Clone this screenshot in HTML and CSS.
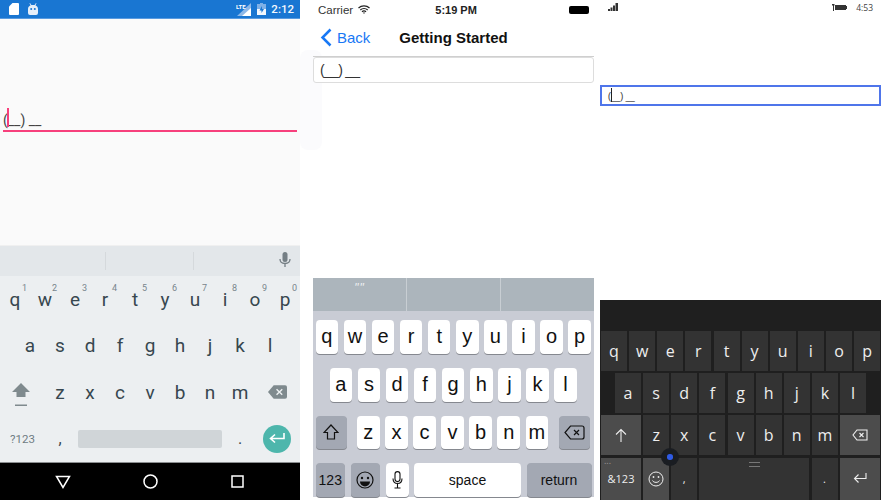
FILE: index.html
```html
<!DOCTYPE html>
<html lang="en">
<head>
  <meta charset="UTF-8">
  <title>Masked entry on three platforms</title>
  <link rel="stylesheet" href="styles.css">
</head>
<body>
<div class="screens">

  <!-- android -->
  <section class="android">
    <div class="a-status">
      <svg width="10" height="12" viewBox="0 0 10 12"><path d="M3.5 0H9a1 1 0 0 1 1 1v10a1 1 0 0 1-1 1H1a1 1 0 0 1-1-1V3.5z" fill="#fff"/></svg>
      <svg width="10" height="12" viewBox="0 0 10 12"><path d="M2 0l1.4 2h3.2L8 0l.5.4L7.4 2.2C9 3 10 4 10 6v4a2 2 0 0 1-2 2H2a2 2 0 0 1-2-2V6c0-2 1-3 2.6-3.8L1.5.4z" fill="#e6eef9"/><circle cx="3.2" cy="6" r="1" fill="#1976d2"/><circle cx="6.8" cy="6" r="1" fill="#1976d2"/></svg>
      <span class="a-status-gap"></span>
      <svg width="15" height="14" viewBox="0 0 15 14"><path d="M15 1v13H1z" fill="#8db8e8"/><path d="M15 6v8H6z" fill="#fff"/><text x="0" y="6.5" class="a-lte">LTE</text></svg>
      <svg class="a-ic-bat" width="9" height="12" viewBox="0 0 9 12"><path d="M3 0h3v1h3v11H0V1h3z" fill="#7fb0e6"/><path d="M0 6h9v6H0z" fill="#f2f7fd"/><path d="M5 3L2.5 7.5h2V10L7 6H5z" fill="#1976d2"/></svg>
      <span class="a-time">2:12</span>
    </div>
    <div class="a-content">
      <div class="a-field"><span class="a-cursor"></span>(__) __</div>
    </div>
    <div class="a-suggest">
      <div></div><div></div>
      <div class="a-mic">
        <svg width="12" height="16" viewBox="0 0 12 16"><rect x="3.5" y="0" width="5" height="10" rx="2.5" fill="#757f85"/><path d="M1 7c0 3 2 4.5 5 4.5S11 10 11 7M6 11.5V15" fill="none" stroke="#757f85" stroke-width="1.3"/></svg>
      </div>
    </div>
    <div class="a-keys">
      <div class="a-row">
        <span class="a-key">q<sup>1</sup></span><span class="a-key">w<sup>2</sup></span><span class="a-key">e<sup>3</sup></span><span class="a-key">r<sup>4</sup></span><span class="a-key">t<sup>5</sup></span><span class="a-key">y<sup>6</sup></span><span class="a-key">u<sup>7</sup></span><span class="a-key">i<sup>8</sup></span><span class="a-key">o<sup>9</sup></span><span class="a-key">p<sup>0</sup></span>
      </div>
      <div class="a-row a-row-mid">
        <span class="a-key">a</span><span class="a-key">s</span><span class="a-key">d</span><span class="a-key">f</span><span class="a-key">g</span><span class="a-key">h</span><span class="a-key">j</span><span class="a-key">k</span><span class="a-key">l</span>
      </div>
      <div class="a-row">
        <span class="a-key a-wide a-shift">
          <svg width="18" height="24" viewBox="0 0 18 24"><path d="M9 0L18 9H13.5V14H4.5V9H0z" fill="#7f8a8e"/><rect x="3" y="21.5" width="12" height="1.5" fill="#7f8a8e"/></svg>
        </span>
        <span class="a-key">z</span><span class="a-key">x</span><span class="a-key">c</span><span class="a-key">v</span><span class="a-key">b</span><span class="a-key">n</span><span class="a-key">m</span>
        <span class="a-key a-wide">
          <svg width="19" height="14" viewBox="0 0 20 14"><path d="M6 0H18a2 2 0 0 1 2 2V12a2 2 0 0 1-2 2H6L0 7z" fill="#7f8a8e"/><path d="M9 4l6 6M15 4l-6 6" stroke="#eceff1" stroke-width="1.5"/></svg>
        </span>
      </div>
      <div class="a-row">
        <span class="a-key a-wide a-sym">?123</span>
        <span class="a-key a-punct a-comma">,</span>
        <span class="a-space"><span></span></span>
        <span class="a-key a-punct a-period">.</span>
        <span class="a-key a-wide">
          <span class="a-enter">
            <svg width="16" height="11" viewBox="0 0 16 11"><path d="M15 0v5.5H2M6 1.5L1.5 5.5 6 9.5" fill="none" stroke="#fff" stroke-width="1.6"/></svg>
          </span>
        </span>
      </div>
    </div>
    <div class="a-nav">
      <svg width="16" height="14" viewBox="0 0 16 14"><path d="M1.5 1.5h13L8 12.5z" fill="none" stroke="#fff" stroke-width="1.5"/></svg>
      <svg width="15" height="15" viewBox="0 0 15 15"><circle cx="7.5" cy="7.5" r="6.5" fill="none" stroke="#fff" stroke-width="1.5"/></svg>
      <svg width="13" height="13" viewBox="0 0 13 13"><rect x="1" y="1" width="11" height="11" fill="none" stroke="#fff" stroke-width="1.5"/></svg>
    </div>
  </section>

  <!-- ios -->
  <section class="ios">
    <div class="i-status">
      <span class="i-carrier">Carrier</span>
      <svg width="12" height="9" viewBox="0 0 12 9"><path d="M0.5 3a8 8 0 0 1 11 0M2.3 5a5.3 5.3 0 0 1 7.4 0M4 6.8a2.7 2.7 0 0 1 4 0" fill="none" stroke="#222" stroke-width="1.2"/><path d="M5 7.5L6 9l1-1.5z" fill="#222"/></svg>
      <span class="i-clock">5:19 PM</span>
      <span class="i-batt"></span>
    </div>
    <div class="i-nav">
      <svg width="12" height="19" viewBox="0 0 12 19"><path d="M10.5 1.5L2.5 9.5l8 8" fill="none" stroke="#1878f5" stroke-width="2.5"/></svg>
      <span class="i-back">Back</span>
      <span class="i-title">Getting Started</span>
    </div>
    <div class="i-field">(__) __</div>
    <div class="i-keyboard">
      <div class="i-suggest"><div class="i-quote">""</div><div></div><div></div></div>
      <div class="i-keys">
        <div class="i-row">
          <span class="i-key">q</span><span class="i-key">w</span><span class="i-key">e</span><span class="i-key">r</span><span class="i-key">t</span><span class="i-key">y</span><span class="i-key">u</span><span class="i-key">i</span><span class="i-key">o</span><span class="i-key">p</span>
        </div>
        <div class="i-row i-row-mid">
          <span class="i-key">a</span><span class="i-key">s</span><span class="i-key">d</span><span class="i-key">f</span><span class="i-key">g</span><span class="i-key">h</span><span class="i-key">j</span><span class="i-key">k</span><span class="i-key">l</span>
        </div>
        <div class="i-row">
          <span class="i-key i-dark i-shift">
            <svg width="16" height="16" viewBox="0 0 16 16"><path d="M8 1L15 8.5H11.5V15H4.5V8.5H1z" fill="none" stroke="#111" stroke-width="1.2"/></svg>
          </span>
          <span class="i-key">z</span><span class="i-key">x</span><span class="i-key">c</span><span class="i-key">v</span><span class="i-key">b</span><span class="i-key">n</span><span class="i-key">m</span>
          <span class="i-key i-dark i-shift">
            <svg width="21" height="15" viewBox="0 0 21 15"><path d="M6.5 1H18a2 2 0 0 1 2 2V12a2 2 0 0 1-2 2H6.5L1 7.5z" fill="none" stroke="#111" stroke-width="1.2"/><path d="M10 5l5 5M15 5l-5 5" stroke="#111" stroke-width="1.2"/></svg>
          </span>
        </div>
        <div class="i-row">
          <span class="i-key i-dark i-small i-fn">123</span>
          <span class="i-key i-dark i-fn">
            <svg width="18" height="18" viewBox="0 0 18 18"><circle cx="9" cy="9" r="8" fill="none" stroke="#111" stroke-width="1.2"/><circle cx="6" cy="7" r="1.2" fill="#111"/><circle cx="12" cy="7" r="1.2" fill="#111"/><path d="M4 10.5h10a5 5 0 0 1-10 0z" fill="#111"/></svg>
          </span>
          <span class="i-key i-mic">
            <svg width="11" height="18" viewBox="0 0 11 18"><rect x="3" y="0.6" width="5" height="10" rx="2.5" fill="none" stroke="#111" stroke-width="1.1"/><path d="M1 7.5c0 3.5 2 5 4.5 5s4.5-1.5 4.5-5M5.5 12.5V17M2.500 17h6" fill="none" stroke="#111" stroke-width="1.1"/></svg>
          </span>
          <span class="i-key i-small i-spacebar">space</span>
          <span class="i-key i-dark i-small i-return">return</span>
        </div>
      </div>
    </div>
  </section>

  <!-- windows -->
  <section class="win">
    <div class="w-status">
      <svg width="10" height="8" viewBox="0 0 10 8"><path d="M0 6h2v2H0zM2.5 4.5h2V8h-2zM5 2.5h2V8H5zM7.5 0H10v8H7.5z" fill="#333"/></svg>
      <span class="w-gap"></span>
      <svg width="15" height="7" viewBox="0 0 15 7"><path d="M0 0h2.5v1.5H2V7H1V1.5H0zM3 1h11v1h1v3h-1v1H3z" fill="#333"/></svg>
      <span class="w-time">4:53</span>
    </div>
    <div class="w-field"><span class="w-cursor"></span>(__) __</div>
    <div class="w-keyboard">
      <div class="w-row">
        <span class="w-key">q</span><span class="w-key">w</span><span class="w-key">e</span><span class="w-key">r</span><span class="w-key">t</span><span class="w-key">y</span><span class="w-key">u</span><span class="w-key">i</span><span class="w-key">o</span><span class="w-key">p</span>
      </div>
      <div class="w-row w-row-mid">
        <span class="w-key">a</span><span class="w-key">s</span><span class="w-key">d</span><span class="w-key">f</span><span class="w-key">g</span><span class="w-key">h</span><span class="w-key">j</span><span class="w-key">k</span><span class="w-key">l</span>
      </div>
      <div class="w-row">
        <span class="w-key w-fn w-wide">
          <svg width="12" height="14" viewBox="0 0 12 14"><path d="M6 14V1.5M1 6.5l5-5 5 5" fill="none" stroke="#eee" stroke-width="1.1"/></svg>
        </span>
        <span class="w-key">z</span><span class="w-key">x</span><span class="w-key">c</span><span class="w-key">v</span><span class="w-key">b</span><span class="w-key">n</span><span class="w-key">m</span>
        <span class="w-key w-fn w-wide">
          <svg width="16" height="12" viewBox="0 0 16 12"><path d="M5 1H15V11H5L1 6z" fill="none" stroke="#eee" stroke-width="1.1"/><path d="M7.5 4l4 4M11.5 4l-4 4" stroke="#eee" stroke-width="1.1"/></svg>
        </span>
      </div>
      <div class="w-row">
        <span class="w-key w-fn w-wide w-sym"><i class="w-dots">...</i>&amp;123</span>
        <span class="w-key w-fn">
          <svg width="16" height="16" viewBox="0 0 16 16"><circle cx="8" cy="8" r="7" fill="none" stroke="#eee" stroke-width="1"/><circle cx="5.5" cy="6" r="0.9" fill="#eee"/><circle cx="10.5" cy="6" r="0.9" fill="#eee"/><path d="M4.5 9.5c1 2.5 6 2.5 7 0" fill="none" stroke="#eee" stroke-width="1"/></svg>
        </span>
        <span class="w-key w-low">,</span>
        <span class="w-key w-spacebar"><i class="w-grip"></i></span>
        <span class="w-key w-low">.</span>
        <span class="w-key w-fn w-wide">
          <svg width="14" height="11" viewBox="0 0 14 11"><path d="M13 0v5.5H1.5M5.5 1.5L1.5 5.5l4 4" fill="none" stroke="#eee" stroke-width="1.1"/></svg>
        </span>
      </div>
      <span class="w-knob"><i></i></span>
    </div>
  </section>

</div>
</body>
</html>
```

FILE: styles.css
```css
html, body {
  margin: 0;
  padding: 0;
  background: #fff;
}

.screens {
  display: flex;
  width: 881px;
  height: 500px;
  overflow: hidden;
}

section {
  height: 500px;
  display: flex;
  flex-direction: column;
  position: relative;
}

/* android */
.android {
  width: 300px;
  background: #fafafa;
  font-family: Roboto, sans-serif;
}

.a-status {
  height: 18px;
  background: #1976d2;
  border-bottom: 1px solid #5a9be0;
  display: flex;
  align-items: center;
  padding: 0 6px 0 9px;
  gap: 9px;
}

.a-status-gap {
  flex: 1;
}

.a-lte {
  font: 700 6px "Liberation Sans Narrow", Roboto, sans-serif;
  fill: #fff;
}

.a-ic-bat {
  margin-left: -3px;
}

.a-time {
  color: #f3f8fd;
  font-size: 11.5px;
  font-weight: 500;
  margin-left: -4px;
}

.a-content {
  flex: 1;
  padding: 90px 3px 0;
}

.a-field {
  position: relative;
  height: 21px;
  border-bottom: 2px solid #f7407c;
  font-size: 14px;
  line-height: 23px;
  color: #444;
}

.a-cursor {
  position: absolute;
  left: 4px;
  top: -1px;
  width: 1.5px;
  height: 19px;
  background: #f7407c;
}

.a-suggest {
  height: 30px;
  background: #e3e7ea;
  border-top: 1px solid #f0f0f0;
  display: flex;
  align-items: center;
}

.a-suggest div {
  height: 18px;
  width: 87px;
  border-right: 1px solid #d5d9dc;
}

.a-suggest div:first-child {
  width: 105px;
}

.a-suggest .a-mic {
  flex: 1;
  border: 0;
  display: flex;
  justify-content: flex-end;
  padding-right: 9px;
}

.a-keys {
  height: 187px;
  background: #eceff1;
  border-bottom: 1px solid #8b8e90;
  box-sizing: border-box;
  display: flex;
  flex-direction: column;
}

.a-row {
  flex: 1;
  display: flex;
}

.a-row-mid {
  padding: 0 15px;
}

.a-key {
  flex: 1;
  position: relative;
  display: flex;
  align-items: center;
  justify-content: center;
  font-size: 19px;
  color: #37474f;
}

.a-key sup {
  position: absolute;
  top: 7px;
  right: 3px;
  font-size: 9px;
  line-height: 10px;
  color: #78858c;
}

.a-wide {
  flex: 0 0 45px;
}

.a-shift {
  padding-right: 3px;
  padding-top: 5px;
  box-sizing: border-box;
}

.a-sym {
  font-size: 11.5px;
  color: #6f7c83;
}

.a-punct {
  flex: 0 0 33px;
  box-sizing: border-box;
  font-size: 16px;
}

.a-comma {
  padding-right: 3px;
}

.a-period {
  padding-left: 3px;
}

.a-space {
  flex: 1;
  display: flex;
  align-items: center;
}

.a-space span {
  display: block;
  width: 100%;
  height: 18px;
  background: #d0d5d8;
  border-radius: 2px;
}

.a-enter {
  width: 28px;
  height: 28px;
  margin-left: -1px;
  border-radius: 50%;
  background: #4db6ac;
  display: flex;
  align-items: center;
  justify-content: center;
}

.a-nav {
  height: 37px;
  background: #000;
  display: flex;
  align-items: center;
  gap: 72.5px;
  padding-left: 54.5px;
}

/* ios */
.ios {
  width: 300px;
  padding: 0 6px 0 13px;
  box-sizing: border-box;
  background: #fff;
  font-family: "Liberation Sans", Arial, sans-serif;
}

/* faint smudge left of the field */
.ios::before {
  content: "";
  position: absolute;
  left: 0;
  top: 50px;
  width: 22px;
  height: 100px;
  border-radius: 8px;
  background: #fbfbfd;
}

.i-status {
  height: 19px;
  padding: 0 5px;
  display: flex;
  align-items: center;
  gap: 5px;
  font-size: 11.5px;
  color: #333;
}

.i-clock {
  flex: 1;
  text-align: center;
  font-size: 11px;
  font-weight: 700;
  color: #222;
  padding-right: 27px;
}

.i-batt {
  width: 20px;
  height: 8px;
  background: #000;
  border-radius: 2px;
  box-shadow: 1.5px 0 0 -2.5px #000;
}

.i-nav {
  height: 37px;
  padding-left: 7px;
  display: flex;
  align-items: center;
  gap: 5px;
  border-bottom: 1px solid #cfcfcf;
  position: relative;
}

.i-back {
  font-size: 15px;
  color: #1878f5;
}

.i-title {
  font-size: 15px;
  font-weight: 700;
  color: #111;
  margin-left: 24px;
}

.i-field {
  height: 26px;
  box-sizing: border-box;
  border: 1px solid #ddd;
  border-radius: 3px;
  padding-left: 6px;
  font-size: 14px;
  letter-spacing: -0.7px;
  line-height: 24px;
  color: #333;
  position: relative;
  background: #fff;
}

.i-keyboard {
  margin-top: auto;
  margin-bottom: 3px;
}

.i-suggest {
  height: 33px;
  background: #acb5bc;
  display: flex;
}

.i-suggest div {
  flex: 1;
  border-left: 1px solid #c8ced3;
}

.i-suggest div:first-child {
  border-left: 0;
}

.i-quote {
  color: #eef0f2;
  font-size: 12px;
  font-style: italic;
  letter-spacing: 1px;
  text-align: center;
  line-height: 21px;
}

.i-keys {
  height: 186px;
  box-sizing: border-box;
  background: #c9ccd5;
  padding: 9px 2.5px 0;
  display: flex;
  flex-direction: column;
  gap: 14px;
}

.i-row {
  height: 34px;
  display: flex;
  gap: 5.5px;
}

.i-row-mid {
  padding: 0 14px;
}

.i-key {
  flex: 0 0 22.6px;
  display: flex;
  align-items: center;
  justify-content: center;
  background: #fff;
  border-radius: 4px;
  box-shadow: 0 1px 0 #85888f;
  font-size: 20px;
  color: #111;
}

.i-key.i-shift {
  flex-basis: 31px;
}

.i-shift:first-child {
  margin-right: 5px;
}

.i-shift:last-child {
  margin-left: 5px;
}

.i-dark {
  background: #a3a8b3;
}

.i-small {
  font-size: 14px;
}

.i-key.i-fn {
  flex-basis: 29.5px;
}

.i-key.i-mic {
  flex-basis: 23px;
}

.i-key.i-spacebar {
  flex-basis: 107px;
}

.i-key.i-return {
  flex-basis: 65px;
}

/* windows */
.win {
  width: 281px;
  background: #fff;
  font-family: "Open Sans", "Noto Sans", sans-serif;
}

.w-status {
  height: 14px;
  padding: 0 8px;
  display: flex;
  align-items: center;
  gap: 9px;
  font-size: 8.5px;
  color: #444;
}

.w-gap {
  flex: 1;
}

.w-field {
  position: relative;
  margin-top: 71px;
  height: 21px;
  box-sizing: border-box;
  border: 2px solid #4f75ea;
  padding-left: 6px;
  font-size: 11px;
  letter-spacing: -0.3px;
  line-height: 18px;
  color: #444;
}

.w-cursor {
  position: absolute;
  left: 9px;
  top: 1px;
  width: 1px;
  height: 14px;
  background: #222;
}

.w-keyboard {
  position: relative;
  margin-top: auto;
  height: 200px;
  box-sizing: border-box;
  background: #1f1f1f;
  padding: 31px 1px 0;
  display: flex;
  flex-direction: column;
  gap: 2.2px;
}

.w-row {
  height: 40px;
  display: flex;
  gap: 2.13px;
}

.w-row:last-of-type {
  height: 42px;
}

.w-row-mid {
  padding-left: 14px;
}

.w-key {
  flex: 0 0 26px;
  display: flex;
  align-items: center;
  justify-content: center;
  position: relative;
  background: #333;
  color: #eee;
  font-size: 16px;
}

.w-key.w-wide {
  flex-basis: 40px;
}

.w-fn {
  background: #4c4c4c;
}

.w-key.w-sym {
  font-size: 11px;
}

.w-dots {
  position: absolute;
  left: 3px;
  top: -4px;
  font-size: 9px;
  font-style: normal;
  color: #999;
}

.w-key.w-low {
  font-size: 11px;
}

.w-key.w-spacebar {
  flex-basis: 110px;
}

.w-grip {
  position: absolute;
  top: 4px;
  left: 50px;
  width: 11px;
  height: 3px;
  border-top: 1px solid #777;
  border-bottom: 1px solid #777;
}

.w-knob {
  position: absolute;
  left: 61px;
  top: 148px;
  width: 18px;
  height: 18px;
  border-radius: 50%;
  background: #1a1d22;
  display: flex;
  align-items: center;
  justify-content: center;
}

.w-knob i {
  width: 5.5px;
  height: 5.5px;
  border-radius: 50%;
  background: #2f5be6;
}
```
